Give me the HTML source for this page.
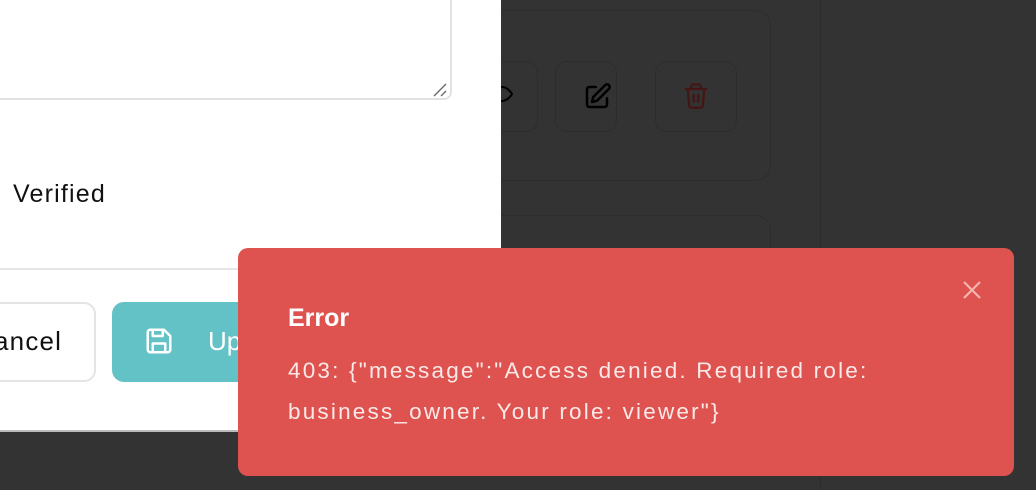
<!DOCTYPE html>
<html style="overflow:hidden;height:490px"><head><style>
*{margin:0;padding:0;box-sizing:border-box}
body{width:1036px;height:490px;overflow:hidden;background:#333;font-family:"Liberation Sans",sans-serif;position:relative}
.abs{position:absolute}
</style></head><body>
<div class="abs" style="left:820px;top:0;width:1px;height:490px;background:#2d2d2d"></div>
<div class="abs" style="left:470px;top:10px;width:301px;height:171px;border:1px solid #2d2d2d;border-radius:16px"></div>
<div class="abs" style="left:470px;top:215px;width:301px;height:260px;border:1px solid #2d2d2d;border-radius:16px"></div>
<div class="abs" style="left:470px;top:61px;width:68px;height:71px;border:1px solid #2d2d2d;border-radius:12px"></div>
<div class="abs" style="left:555px;top:61px;width:62px;height:71px;border:1px solid #2d2d2d;border-radius:12px"></div>
<div class="abs" style="left:655px;top:61px;width:82px;height:71px;border:1px solid #2d2d2d;border-radius:12px"></div>
<svg class="abs" style="left:490px;top:82px" width="24" height="24" viewBox="0 0 24 24" fill="none" stroke="#000" stroke-width="2"><path d="M2 12s4-7 10-7 10 7 10 7-4 7-10 7S2 12 2 12z"/></svg>
<svg class="abs" style="left:582px;top:82px" width="30" height="30" viewBox="0 0 24 24" fill="none" stroke="#000" stroke-width="2" stroke-linecap="round" stroke-linejoin="round"><path d="M11 4H6a2 2 0 0 0-2 2v12a2 2 0 0 0 2 2h12a2 2 0 0 0 2-2v-5"/><path d="M18.5 2.5a2.1 2.1 0 0 1 3 3L12 15l-4 1 1-4z"/></svg>
<svg class="abs" style="left:682px;top:82px" width="28" height="28" viewBox="0 0 24 24" fill="none" stroke="#431614" stroke-width="2" stroke-linecap="round"><path d="M3 6h18M8 6V4a2 2 0 0 1 2-2h4a2 2 0 0 1 2 2v2M19 6l-1 14a2 2 0 0 1-2 2H8a2 2 0 0 1-2-2L5 6M10 11v6M14 11v6"/></svg>

<div class="abs" style="left:0;top:0;width:501px;height:432px;background:#fff;border-bottom:2px solid #bbb">
  <div class="abs" style="left:-10px;top:-10px;width:462px;height:110px;border:2px solid #e2e2e2;border-radius:8px"></div>
  <svg class="abs" style="left:432px;top:82px" width="16" height="16"><path d="M2 14L14 2M9 14L14 9" stroke="#666" stroke-width="1.3"/></svg>
  <div class="abs" style="left:13px;top:180px;font-size:25px;letter-spacing:1.2px;color:#111">Verified</div>
  <div class="abs" style="left:0;top:268px;width:501px;height:2px;background:#e6e6e6"></div>
  <div class="abs" style="left:-20px;top:302px;width:116px;height:80px;border:2px solid #e4e4e4;border-radius:12px"></div>
  <div class="abs" style="left:-6px;top:326px;font-size:26px;letter-spacing:1.2px;color:#111">ancel</div>
  <div class="abs" style="left:112px;top:302px;width:200px;height:80px;background:#63c2c6;border-radius:12px"></div>
  <svg class="abs" style="left:144px;top:326px" width="30" height="30" viewBox="0 0 24 24" fill="none" stroke="#fff" stroke-width="2" stroke-linejoin="round"><path d="M5 3h11l5 5v11a2 2 0 0 1-2 2H5a2 2 0 0 1-2-2V5a2 2 0 0 1 2-2z"/><path d="M7 3v5h8V3M7 21v-7h10v7"/></svg>
  <div class="abs" style="left:208px;top:326px;font-size:26px;color:#fff">Up</div>
</div>

<div class="abs" style="left:238px;top:248px;width:776px;height:228px;background:#de534f;border-radius:10px">
  <div class="abs" style="left:50px;top:56px;font-size:25px;font-weight:bold;color:#fff">Error</div>
  <div class="abs" style="left:50px;top:102px;font-size:22.5px;line-height:41px;letter-spacing:2.2px;color:#fbe9e8;width:670px">403: {"message":"Access denied. Required role: business_owner. Your role: viewer"}</div>
  <svg class="abs" style="left:724px;top:32px" width="20" height="20"><path d="M2 2L18 18M18 2L2 18" stroke="#f4b4b0" stroke-width="2.2"/></svg>
</div>
</body></html>
